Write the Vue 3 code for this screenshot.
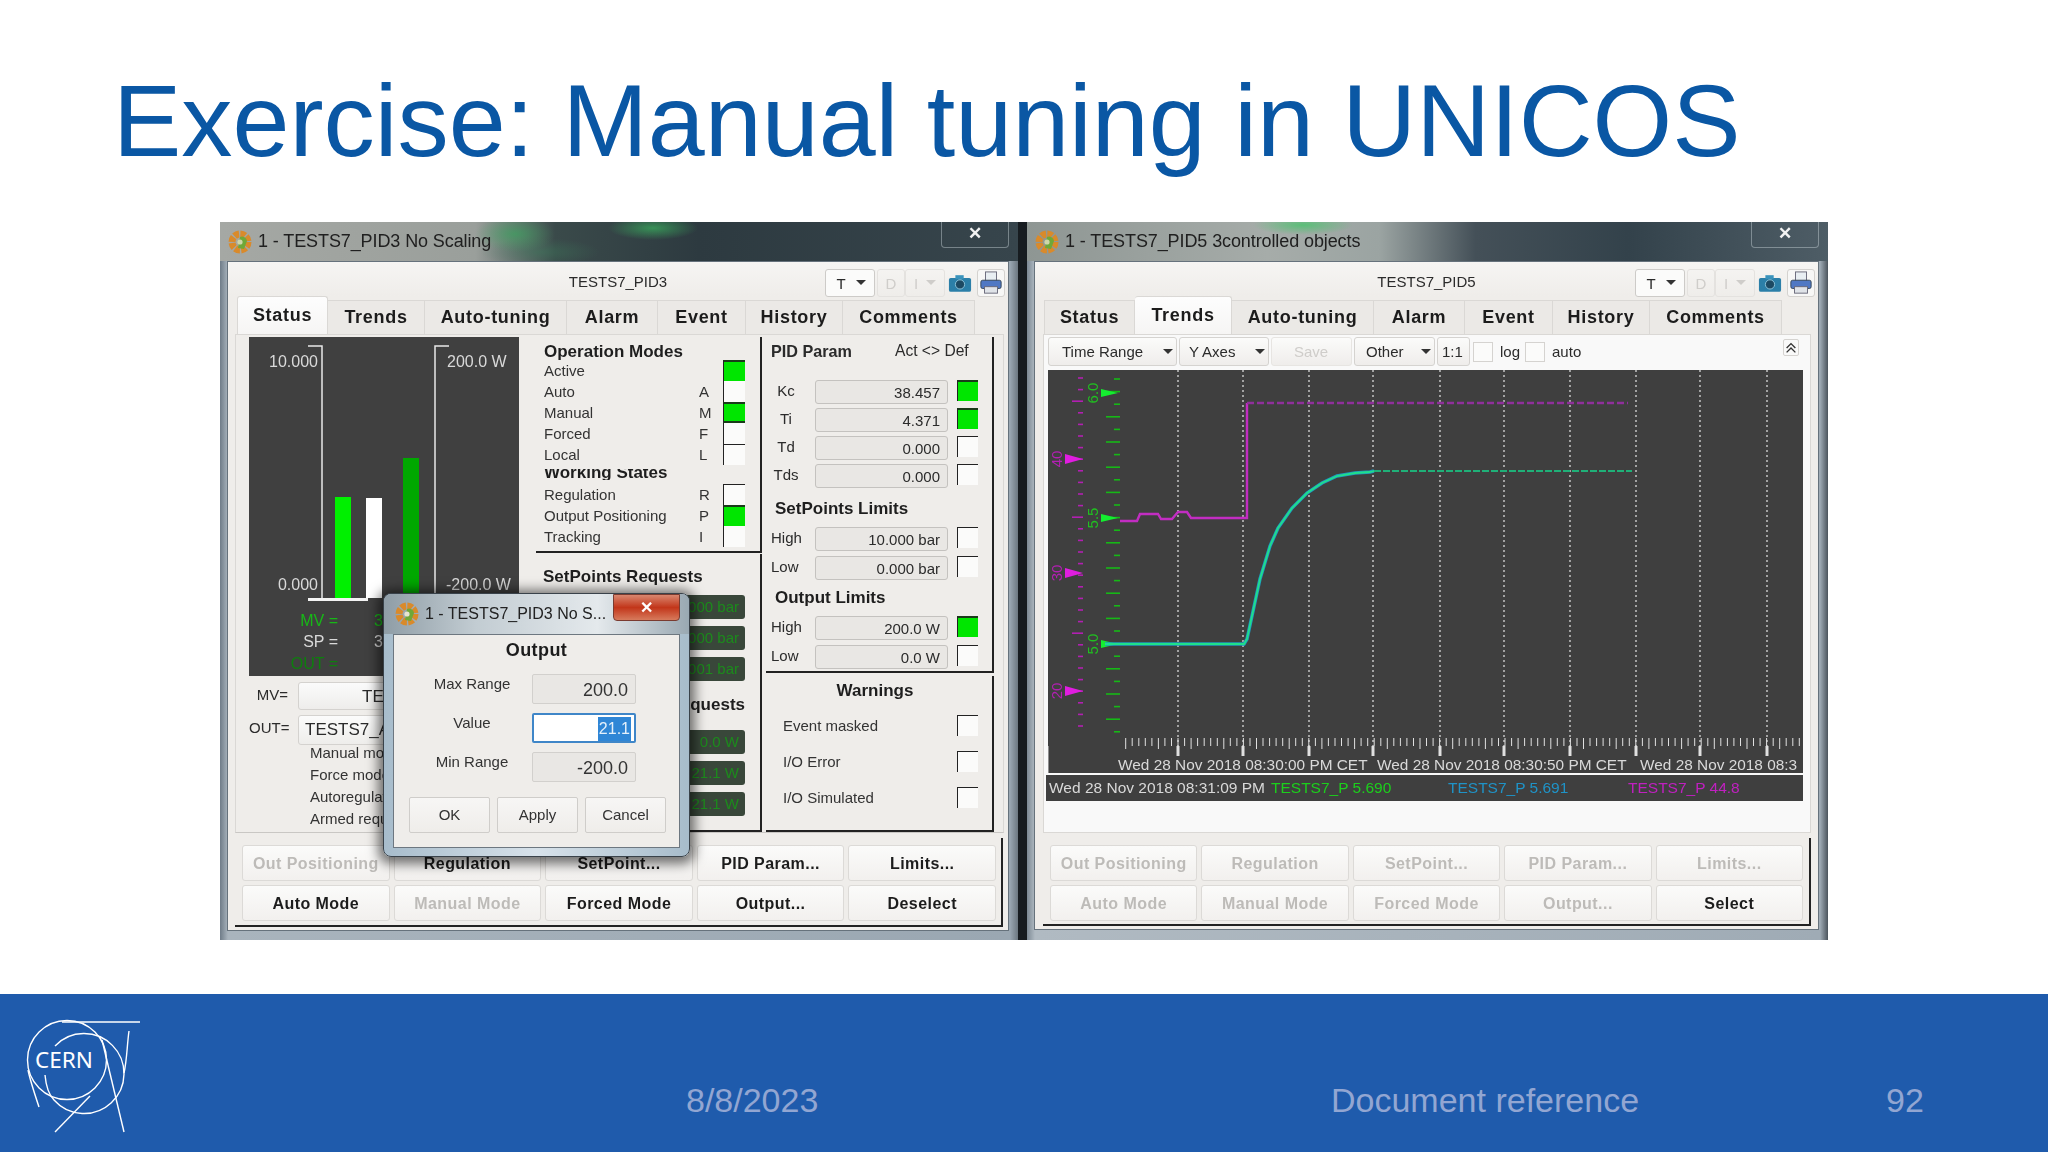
<template>
  <div class="slide">
    <h1 class="title">Exercise: Manual tuning in UNICOS</h1>

    <div class="shot">
      <div v-for="w in windows" :key="w.name" class="win" :class="w.cls">
        <div class="titlebar">
          <svg class="gear" viewBox="0 0 24 24">
            <circle cx="12" cy="12" r="8" fill="none" stroke="#d98a2b" stroke-width="7" stroke-dasharray="5 1.3" />
            <path d="M12 7a5 5 0 0 1 7 4l-3 8-6-1z" fill="#6fa838" />
            <circle cx="12" cy="12" r="2.6" fill="#cfd6a8" />
          </svg>
          <span class="wintitle">{{ w.title }}</span>
          <span class="winclose">✕</span>
        </div>

        <div class="client">
          <div class="head">
            <span></span>
            <span class="devname">{{ w.name }}</span>
            <div class="tools">
              <span class="tool t-t">T<i class="caret"></i></span>
              <span class="tool t-d off">D</span>
              <span class="tool t-i off">I<i class="caret"></i></span>
              <span class="tool t-c">
                <svg viewBox="0 0 26 20" width="24" height="19">
                  <rect x="1" y="4" width="24" height="15" rx="2" fill="#2b7fa8" />
                  <rect x="8" y="1" width="9" height="4" fill="#3a93bc" />
                  <circle cx="13" cy="11" r="5" fill="#1d4a63" stroke="#8fc7dd" />
                </svg>
              </span>
              <span class="tool t-p">
                <svg viewBox="0 0 26 26" width="24" height="24">
                  <rect x="7" y="1" width="12" height="10" fill="#e8eef2" stroke="#667" />
                  <rect x="2" y="10" width="22" height="9" rx="2" fill="#4f78c4" stroke="#345" />
                  <rect x="6" y="17" width="14" height="7" fill="#dfe3e8" stroke="#667" />
                </svg>
              </span>
            </div>
          </div>

          <div class="tabs">
            <span
              v-for="t in tabs"
              :key="t.n"
              class="tab"
              :class="{ active: t.n === w.active }"
              :style="{ width: t.w + 'px' }"
            >{{ t.n }}</span>
          </div>

          <!-- Status tab -->
          <div v-if="w.active === 'Status'" class="pane status">
            <div class="gaugecol">
              <svg class="gauge" viewBox="248 337 270 339">
                <rect x="248" y="337" width="270" height="339" fill="#404040" />
                <path d="M307 346h14v252M448 346h-14v252" fill="none" stroke="#e8e8e8" stroke-width="1.5" />
                <rect x="307" y="598" width="60" height="3" fill="#f4f4f4" />
                <rect x="334" y="497" width="16" height="101" fill="#00f000" />
                <rect x="365" y="498" width="16" height="100" fill="#fff" />
                <rect x="402" y="458" width="16" height="140" fill="#00a800" />
                <text x="317" y="367" class="g r">10.000</text>
                <text x="446" y="367" class="g">200.0 W</text>
                <text x="317" y="590" class="g r">0.000</text>
                <text x="445" y="590" class="g">-200.0 W</text>
                <text x="337" y="626" class="g r bright">MV =</text>
                <text x="337" y="647" class="g r">SP =</text>
                <text x="337" y="669" class="g r dim">OUT =</text>
                <text x="373" y="626" class="g bright">38.5</text>
                <text x="373" y="647" class="g">38.5</text>
              </svg>
              <div class="mvrow">
                <span class="mvlabel">MV=</span>
                <span class="mvfield center">TESTS7_AI</span>
              </div>
              <div class="mvrow out">
                <span class="mvlabel">OUT=</span>
                <span class="mvfield">TESTS7_AO</span>
              </div>
              <ul class="notes">
                <li v-for="n in notes" :key="n">{{ n }}</li>
              </ul>
            </div>

            <div class="midcol">
              <div class="ops">
                <div class="h">Operation Modes</div>
                <div v-for="r in opModes" :key="r.n" class="oprow">
                  <span class="opname">{{ r.n }}</span>
                  <span class="opkey">{{ r.k }}</span>
                  <span class="led" :class="r.c"></span>
                </div>
                <div class="h clipped">Working States</div>
                <div v-for="r in workStates" :key="r.n" class="oprow">
                  <span class="opname">{{ r.n }}</span>
                  <span class="opkey">{{ r.k }}</span>
                  <span class="led" :class="r.c"></span>
                </div>
              </div>
              <div class="reqs">
                <div class="h reqh">SetPoints Requests</div>
                <span v-for="v in spReq" :key="v" class="reqfield">{{ v }}</span>
                <div class="h reqh second">Output Requests</div>
                <span v-for="v in outReq" :key="v" class="reqfield">{{ v }}</span>
              </div>
            </div>

            <div class="rightcol">
              <div class="pid">
                <div class="pidhead"><b>PID Param</b><span>Act &lt;&gt; Def</span></div>
                <div v-for="r in pidRows" :key="r.l" class="pidrow" :class="r.cls">
                  <span class="pidlabel" :class="{ mid: r.mid }">{{ r.l }}</span>
                  <span class="readout">{{ r.v }}</span>
                  <span class="led flag" :class="r.on ? 'on' : 'box'"></span>
                </div>
                <div class="h limith one">SetPoints Limits</div>
                <div v-for="r in spLimits" :key="r.l" class="pidrow lim">
                  <span class="pidlabel">{{ r.l }}</span>
                  <span class="readout">{{ r.v }}</span>
                  <span class="led flag" :class="r.on ? 'on' : 'box'"></span>
                </div>
                <div class="h limith two">Output Limits</div>
                <div v-for="r in outLimits" :key="r.l" class="pidrow lim">
                  <span class="pidlabel">{{ r.l }}</span>
                  <span class="readout">{{ r.v }}</span>
                  <span class="led flag" :class="r.on ? 'on' : 'box'"></span>
                </div>
              </div>
              <div class="warnings">
                <div class="h warnh">Warnings</div>
                <div v-for="n in warnings" :key="n" class="warnrow">
                  <span>{{ n }}</span>
                  <span class="led flag box"></span>
                </div>
              </div>
            </div>
          </div>

          <!-- Trends tab -->
          <div v-else class="pane trends">
            <div class="trendbar">
              <span class="tb w129">Time Range<i class="caret"></i></span>
              <span class="tb w92">Y Axes<i class="caret"></i></span>
              <span class="tb w81 off">Save</span>
              <span class="tb w82">Other<i class="caret"></i></span>
              <span class="tb w33">1:1</span>
              <span class="chk"></span><span class="chklabel">log</span>
              <span class="chk"></span><span class="chklabel">auto</span>
              <span class="collapse">
                <svg viewBox="0 0 16 16" width="16" height="16">
                  <path d="M3 8l5-5 5 5M3 13l5-5 5 5" fill="none" stroke="#333" stroke-width="1.6" />
                </svg>
              </span>
            </div>
            <svg class="chart" viewBox="1048 369 755 403">
              <rect x="1048" y="369" width="755" height="403" fill="#3f3f3f" />
              <line
                v-for="x in gridX"
                :key="x"
                :x1="x" y1="369" :x2="x" y2="745"
                stroke="#e4e4e4" stroke-width="1.2" stroke-dasharray="2 3"
              />
              <!-- purple axis -->
              <line
                v-for="t in purpleTicks"
                :key="'p' + t.y"
                :x1="t.major ? 1072 : 1078" :y1="t.y" x2="1083" :y2="t.y"
                stroke="#b21fb2" stroke-width="1.6"
              />
              <g v-for="l in purpleLabels" :key="l.t">
                <path :d="`M1065 ${l.y - 5}l18 5-18 5z`" fill="#e01de0" />
                <text :transform="`translate(1062 ${l.y}) rotate(-90)`" class="axis" fill="#b21fb2">{{ l.t }}</text>
              </g>
              <!-- green axis -->
              <line
                v-for="t in greenTicks"
                :key="'g' + t.y"
                :x1="t.major ? 1106 : 1114" :y1="t.y" x2="1120" :y2="t.y"
                stroke="#16b816" stroke-width="1.6"
              />
              <g v-for="l in greenLabels" :key="l.t">
                <path :d="`M1101 ${l.y - 4}l17 4-17 4z`" fill="#14ee30" />
                <text :transform="`translate(1098 ${l.y}) rotate(-90)`" class="axis" fill="#20c020">{{ l.t }}</text>
              </g>
              <!-- traces -->
              <path
                d="M1120 520H1137L1140 513H1158L1161 518H1172L1178 511H1187L1191 517H1247V402"
                fill="none" stroke="#c22dc2" stroke-width="2.4"
              />
              <path d="M1247 402H1628" fill="none" stroke="#8f2f9c" stroke-width="2.4" stroke-dasharray="7 3" />
              <path :d="curve" fill="none" stroke="#1f9ac0" stroke-width="3.4" />
              <path :d="curve" fill="none" stroke="#1fe08a" stroke-width="1.8" />
              <path d="M1374 470H1632" fill="none" stroke="#1fb078" stroke-width="2" stroke-dasharray="7 2" />
              <!-- time axis -->
              <line
                v-for="t in timeTicks"
                :key="'t' + t.x"
                :x1="t.x" y1="737" :x2="t.x" :y2="t.mid ? 748 : 745"
                stroke="#e0e0e0"
              />
              <rect v-for="x in gridX" :key="'m' + x" :x="x - 1.5" y="745" width="3" height="10" fill="#e0e0e0" />
              <line x1="1048" y1="745" x2="1048" y2="772" stroke="#ddd" />
              <text x="1118" y="769" class="stamp">Wed 28 Nov 2018 08:30:00 PM CET</text>
              <text x="1377" y="769" class="stamp">Wed 28 Nov 2018 08:30:50 PM CET</text>
              <text x="1640" y="769" class="stamp">Wed 28 Nov 2018 08:3</text>
            </svg>
            <div class="strip">
              <span class="s-time">Wed 28 Nov 2018 08:31:09 PM</span>
              <span class="s-a">TESTS7_P 5.690</span>
              <span class="s-b">TESTS7_P 5.691</span>
              <span class="s-c">TESTS7_P 44.8</span>
            </div>
          </div>

          <div class="actions">
            <span v-for="b in w.buttons" :key="b.t" class="btn" :class="{ off: b.off }">{{ b.t }}</span>
          </div>
        </div>
      </div>

      <!-- setpoint dialog floats over the first window -->
      <div class="dialog">
        <div class="dlgtitle">
          <svg class="gear" viewBox="0 0 24 24">
            <circle cx="12" cy="12" r="8" fill="none" stroke="#d98a2b" stroke-width="7" stroke-dasharray="5 1.3" />
            <path d="M12 7a5 5 0 0 1 7 4l-3 8-6-1z" fill="#6fa838" />
            <circle cx="12" cy="12" r="2.6" fill="#e8e4d0" />
          </svg>
          <span class="dlgname">1 - TESTS7_PID3 No S...</span>
          <span class="dlgclose">✕</span>
        </div>
        <div class="dlgbody">
          <div class="dlghead">Output</div>
          <div class="dlggrid">
            <span class="dlglabel">Max Range</span><span class="dlgfield">200.0</span>
            <span class="dlglabel">Value</span><span class="dlgfield edit"><em>21.1</em></span>
            <span class="dlglabel">Min Range</span><span class="dlgfield">-200.0</span>
          </div>
          <div class="dlgbtns">
            <span class="dbtn">OK</span>
            <span class="dbtn">Apply</span>
            <span class="dbtn">Cancel</span>
          </div>
        </div>
      </div>
    </div>

    <footer class="footer">
      <svg class="logo" viewBox="0 0 150 150">
        <g fill="none" stroke="#fff" stroke-width="1.4">
          <circle cx="67" cy="70" r="39.5" />
          <path d="M62 32H140" />
          <path d="M55 56A40 40 0 1 1 54 110C48 104 46 96 45 85" />
          <path d="M28 80C30 90 35 105 39 117" />
          <path d="M129 41C127 55 127 70 124 83" />
          <path d="M102 50L124 142" />
          <path d="M90 106L55 142" />
        </g>
        <text x="35" y="78" class="cern">CERN</text>
      </svg>
      <span class="foot date">8/8/2023</span>
      <span class="foot doc">Document reference</span>
      <span class="foot num">92</span>
    </footer>
  </div>
</template>

<script setup>
const tabs = [
  { n: 'Status', w: 91 },
  { n: 'Trends', w: 97 },
  { n: 'Auto-tuning', w: 142 },
  { n: 'Alarm', w: 91 },
  { n: 'Event', w: 88 },
  { n: 'History', w: 97 },
  { n: 'Comments', w: 132 },
];

function buttons(labels, enabled) {
  return labels.map((t) => ({ t, off: !enabled.includes(t) }));
}

const labelsA = ['Out Positioning', 'Regulation', 'SetPoint...', 'PID Param...', 'Limits...'];

const windows = [
  {
    title: '1 - TESTS7_PID3 No Scaling',
    name: 'TESTS7_PID3',
    active: 'Status',
    cls: 'first',
    buttons: buttons(
      [...labelsA, 'Auto Mode', 'Manual Mode', 'Forced Mode', 'Output...', 'Deselect'],
      ['Regulation', 'SetPoint...', 'PID Param...', 'Limits...', 'Auto Mode', 'Forced Mode', 'Output...', 'Deselect'],
    ),
  },
  {
    title: '1 - TESTS7_PID5 3controlled objects',
    name: 'TESTS7_PID5',
    active: 'Trends',
    cls: 'second',
    buttons: buttons(
      [...labelsA, 'Auto Mode', 'Manual Mode', 'Forced Mode', 'Output...', 'Select'],
      ['Select'],
    ),
  },
];

const notes = ['Manual mode', 'Force mode', 'Autoregulation', 'Armed request'];

const opModes = [
  { n: 'Active', k: '', c: 'on' },
  { n: 'Auto', k: 'A', c: 'blank' },
  { n: 'Manual', k: 'M', c: 'on both' },
  { n: 'Forced', k: 'F', c: 'blank' },
  { n: 'Local', k: 'L', c: 'box' },
];
const workStates = [
  { n: 'Regulation', k: 'R', c: 'box' },
  { n: 'Output Positioning', k: 'P', c: 'on' },
  { n: 'Tracking', k: 'I', c: 'blank' },
];
const spReq = ['10.000 bar', '8.000 bar', '0.001 bar'];
const outReq = ['0.0 W', '21.1 W', '21.1 W'];

const pidRows = [
  { l: 'Kc', v: '38.457', on: true, mid: true },
  { l: 'Ti', v: '4.371', on: true, mid: true },
  { l: 'Td', v: '0.000', on: false, mid: true },
  { l: 'Tds', v: '0.000', on: false, mid: true },
];
const spLimits = [
  { l: 'High', v: '10.000 bar', on: false },
  { l: 'Low', v: '0.000 bar', on: false },
];
const outLimits = [
  { l: 'High', v: '200.0 W', on: true },
  { l: 'Low', v: '0.0 W', on: false },
];
const warnings = ['Event masked', 'I/O Error', 'I/O Simulated'];

const gridX = [1178, 1243, 1309, 1373, 1440, 1504, 1570, 1636, 1700, 1767];

const timeTicks = [];
for (let i = 0; i < 104; i++) {
  timeTicks.push({ x: +(1125.7 + i * 6.54).toFixed(1), mid: i % 5 === 0 });
}

const purpleTicks = [];
for (let i = 0; i < 31; i++) {
  const y = +(377 + i * 11.6).toFixed(1);
  purpleTicks.push({ y, major: i % 10 === 2 });
}
const purpleLabels = [
  { t: '40', y: 458 },
  { t: '30', y: 572 },
  { t: '20', y: 690 },
];

const greenTicks = [];
for (let i = 0; i < 29; i++) {
  const y = +(378 + i * 12.6).toFixed(1);
  greenTicks.push({ y, major: i % 2 === 1 });
}
const greenLabels = [
  { t: '6.0', y: 392 },
  { t: '5.5', y: 517 },
  { t: '5.0', y: 643 },
];

const curve =
  'M1105 643H1244L1247 638L1260 578L1270 545L1278 527L1292 507L1307 492L1322 482L1337 475L1355 472L1370 471L1374 470';
</script>

<style scoped>
.slide {
  width: 2048px;
  height: 1152px;
  background: #fff;
  display: flex;
  flex-direction: column;
  font-family: "Liberation Sans", Arial, sans-serif;
  overflow: hidden;
}

.title {
  height: 222px;
  margin: 0;
  padding: 66px 0 0 113px;
  box-sizing: border-box;
  font-size: 102.4px;
  line-height: 110px;
  font-weight: 400;
  color: #0a57a4;
}

.shot {
  position: relative;
  margin-left: 220px;
  width: 1608px;
  height: 718px;
  display: flex;
  gap: 9px;
  background: #171c20;
  filter: blur(0.55px);
  font-size: 15px;
  color: #2b2b2b;
}

/* window chrome */
.win {
  height: 718px;
  display: flex;
  flex-direction: column;
  padding: 0 9px 9px 7px;
  box-sizing: border-box;
}
.win.first {
  width: 798px;
  background: linear-gradient(90deg, #6f7c88 0, #a9b4bd 1%, #9aa7b2 99%, #6c7780 100%);
}
.win.second {
  width: 801px;
  background: linear-gradient(90deg, #7d8a95 0, #b0bac2 1%, #9fabb5 99%, #4b545c 100%);
  padding-bottom: 10px;
}

.titlebar {
  height: 39px;
  flex: none;
  margin: 0 -9px 0 -7px;
  padding-left: 8px;
  display: flex;
  align-items: center;
  gap: 6px;
}
.first .titlebar {
  background:
    radial-gradient(ellipse 40px 18px at 295px 12px, rgba(50, 170, 90, 0.6), transparent),
    radial-gradient(ellipse 45px 12px at 433px 6px, rgba(60, 200, 100, 0.6), transparent),
    radial-gradient(ellipse 60px 14px at 320px 30px, rgba(60, 120, 90, 0.5), transparent),
    linear-gradient(90deg, #a5a8a4 0, #9a9f9b 32%, #3a4a4a 42%, #2d3a40 60%, #37454c 100%);
}
.second .titlebar {
  background:
    radial-gradient(ellipse 50px 10px at 276px 3px, rgba(60, 200, 100, 0.7), transparent),
    linear-gradient(90deg, #8e9693 0, #a6aca9 30%, #9ba4a2 44%, #445058 56%, #33424b 75%, #4e5d66 100%);
}

.gear {
  width: 24px;
  height: 24px;
  flex: none;
}
.wintitle {
  font-size: 18px;
  color: #202020;
  letter-spacing: -0.1px;
}
.winclose {
  margin-left: auto;
  margin-right: 9px;
  align-self: flex-start;
  width: 68px;
  height: 26px;
  border: 1px solid rgba(200, 210, 215, 0.45);
  border-top: 0;
  border-radius: 0 0 4px 4px;
  box-sizing: border-box;
  color: #f2f2f2;
  font-size: 17px;
  font-weight: 700;
  text-align: center;
  line-height: 24px;
}

.client {
  flex: 1;
  display: flex;
  flex-direction: column;
  background: #efedea;
  border: 1px solid #66727c;
  box-sizing: border-box;
  min-height: 0;
}

.head {
  height: 34px;
  flex: none;
  display: grid;
  grid-template-columns: 1fr auto 1fr;
  align-items: start;
  background: linear-gradient(#f6f5f3, #efedea);
}
.devname {
  margin-top: 11px;
  font-size: 15px;
  line-height: 17px;
}
.tools {
  justify-self: end;
  margin-top: 7px;
  margin-right: 3px;
  display: flex;
  height: 28px;
}
.tool {
  position: relative;
  display: flex;
  align-items: center;
  justify-content: center;
  box-sizing: border-box;
  height: 28px;
  border-radius: 3px;
  font-size: 15px;
}
.tool.off {
  color: #cfcdca;
}
.t-t { width: 50px; border: 1px solid #cdcbc8; background: #fbfbfa; padding-right: 18px; }
.t-d { width: 28px; margin-left: 2px; border: 1px solid #e4e2df; }
.t-i { width: 40px; border: 1px solid #e4e2df; padding-right: 18px; }
.t-c { width: 30px; }
.t-p { width: 28px; margin-left: 2px; border: 1px solid #d4d2cf; background: #f7f7f6; }
.caret {
  position: absolute;
  right: 8px;
  top: 10px;
  border: 5px solid transparent;
  border-top: 5px solid #333;
  border-bottom: 0;
}
.t-i .caret {
  border-top-color: #cfcdca;
}

.tabs {
  height: 38px;
  flex: none;
  display: flex;
  align-items: flex-end;
  padding-left: 9px;
}
.tab {
  height: 34px;
  box-sizing: border-box;
  background: #ebe9e6;
  border: 1px solid #dad8d5;
  border-left: 0;
  border-bottom: 0;
  text-align: center;
  font-weight: 700;
  font-size: 18px;
  line-height: 33px;
  letter-spacing: 0.7px;
  color: #1c1c1c;
}
.tab:first-child {
  border-left: 1px solid #dad8d5;
}
.tab.active {
  height: 38px;
  background: linear-gradient(#fdfdfd, #f6f5f4);
  border-radius: 3px 3px 0 0;
  line-height: 36px;
}

.pane {
  height: 499px;
  flex: none;
  margin-left: 7px;
  box-sizing: border-box;
  border: 1px solid #dad8d5;
}

/* status pane */
.status {
  width: 769px;
  padding: 2px 0 0 13px;
  display: flex;
  position: relative;
  background: #efedea;
  border-bottom-color: #c9c7c4;
}
.gaugecol {
  width: 275px;
  flex: none;
}
.gauge {
  display: block;
  width: 270px;
  height: 339px;
}
.g {
  font-size: 16px;
  fill: #d9d9d9;
}
.g.bright {
  fill: #17b717;
}
.g.dim {
  fill: #0d7f0d;
}
.g.r {
  text-anchor: end;
}

.mvrow {
  display: flex;
  align-items: stretch;
  margin-top: 6px;
  margin-right: -8px;
  height: 28px;
}
.mvrow.out {
  margin-top: 5px;
  height: 30px;
}
.mvlabel {
  width: 39px;
  text-align: right;
  margin-right: 10px;
  line-height: 26px;
  font-size: 15px;
}
.mvfield {
  flex: 1;
  background: linear-gradient(#fbfbfb, #eeedeb);
  border: 1px solid #d4d2cf;
  border-radius: 3px;
  box-sizing: border-box;
  padding-left: 6px;
  font-size: 17px;
  line-height: 28px;
  white-space: nowrap;
}
.mvfield.center {
  text-align: center;
  padding: 0 16px 0 0;
}
.notes {
  list-style: none;
  margin: -3px 0 0;
  padding: 0 0 0 61px;
  font-size: 15px;
  line-height: 22px;
  color: #333;
}

.midcol {
  width: 226px;
  margin-left: 12px;
  flex: none;
  display: flex;
  flex-direction: column;
}
.h {
  font-weight: 700;
  font-size: 17px;
  color: #1e1e1e;
}
.ops {
  height: 216px;
  padding: 4px 15px 0 8px;
  box-sizing: border-box;
  border-right: 2px solid #222;
  border-bottom: 2px solid #222;
  flex: none;
}
.ops .h {
  height: 19px;
  line-height: 22px;
}
.ops .h.clipped {
  height: 11px;
  line-height: 7px;
  overflow: hidden;
  margin: 4px 0 4px;
}
.oprow {
  display: grid;
  grid-template-columns: 1fr 24px 22px;
  height: 21px;
  align-items: center;
  font-size: 15px;
  color: #333;
}
.opkey {
  font-size: 15px;
}
.led {
  display: block;
  box-sizing: border-box;
  height: 100%;
  width: 22px;
  border-left: 1px solid #222;
}
.led.on {
  background: #00e600;
  border-top: 2px solid #1a3a1a;
}
.led.both {
  border-bottom: 2px solid #1a3a1a;
}
.led.blank {
  background: #fbfbfa;
}
.led.box {
  background: #fbfbfa;
  border-top: 1px solid #222;
}
.led.flag {
  width: 21px;
  height: 21px;
}

.reqs {
  flex: 1;
  margin-top: 1px;
  padding: 12px 15px 0 7px;
  box-sizing: border-box;
  display: flex;
  flex-direction: column;
  align-items: flex-end;
  border-right: 2px solid #222;
  border-bottom: 2px solid #222;
}
.reqh {
  align-self: flex-start;
  height: 29px;
  line-height: 22px;
  white-space: nowrap;
}
.reqh.second {
  align-self: flex-end;
  height: 49px;
  line-height: 47px;
  margin-top: -7px;
}
.reqfield {
  width: 110px;
  height: 24px;
  flex: none;
  margin-bottom: 7px;
  background: #39473a;
  border-radius: 3px;
  color: #1c8b1c;
  text-align: right;
  padding-right: 6px;
  box-sizing: border-box;
  font-size: 15px;
  line-height: 24px;
}

.rightcol {
  width: 228px;
  margin-left: 4px;
  flex: none;
  display: flex;
  flex-direction: column;
}
.pid {
  height: 336px;
  flex: none;
  box-sizing: border-box;
  padding: 4px 0 0 1px;
  border-right: 2px solid #222;
  border-bottom: 2px solid #222;
}
.pidhead {
  display: flex;
  height: 39px;
  padding-left: 4px;
  line-height: 20px;
  font-size: 15.6px;
}
.pidhead b {
  font-size: 16.2px;
}
.pidhead span {
  margin-left: 43px;
}
.pidrow {
  display: grid;
  grid-template-columns: 48px 133px 21px;
  column-gap: 0;
  height: 24px;
  margin-bottom: 4px;
  align-items: start;
}
.pidrow.lim {
  margin-bottom: 5px;
}
.pidrow .flag {
  margin-left: 9px;
}
.pidlabel {
  line-height: 22px;
  font-size: 15px;
  padding-left: 4px;
}
.pidlabel.mid {
  padding: 0 10px 0 0;
  text-align: center;
}
.readout {
  display: block;
  height: 24px;
  box-sizing: border-box;
  border: 1px solid #c4c2bf;
  border-radius: 3px;
  background: #e9e7e4;
  text-align: right;
  padding-right: 7px;
  font-size: 15px;
  line-height: 24px;
}
.limith {
  padding-left: 8px;
  height: 35px;
  line-height: 34px;
}
.limith.two {
  height: 31px;
  line-height: 26px;
}

.warnings {
  flex: 1;
  margin-top: 3px;
  border-right: 2px solid #222;
  border-bottom: 2px solid #222;
  box-sizing: border-box;
  padding-bottom: 15px;
  display: flex;
  flex-direction: column;
}
.warnh {
  height: 32px;
  line-height: 30px;
  text-align: center;
  padding-right: 8px;
}
.warnrow {
  flex: 1;
  display: flex;
  align-items: center;
  justify-content: space-between;
  padding: 0 14px 0 17px;
  color: #333;
}

/* trends pane */
.trends {
  width: 768px;
  margin-left: 8px;
  background: #f9f9f9;
  padding: 2px 0 0 2px;
}
.trendbar {
  display: flex;
  align-items: center;
  height: 29px;
  padding-left: 2px;
  margin-bottom: 4px;
  font-size: 15px;
}
.tb {
  position: relative;
  height: 29px;
  flex: none;
  box-sizing: border-box;
  border: 1px solid #d5d3d0;
  border-radius: 3px;
  background: linear-gradient(#fbfbfa, #efedeb);
  margin-right: 2px;
  padding-left: 13px;
  line-height: 28px;
}
.tb.off {
  color: #cfcdca;
  padding-left: 22px;
  border-color: #e7e5e2;
}
.w129 { width: 129px; }
.w92 { width: 90px; padding-left: 9px; }
.w81 { width: 81px; }
.w82 { width: 81px; padding-left: 11px; }
.w33 { width: 33px; padding-left: 4px; }
.tb .caret {
  right: 3px;
  top: 11px;
}
.chk {
  flex: none;
  width: 20px;
  height: 20px;
  margin-left: 1px;
  background: #fbfbfa;
  border: 1px solid #d5d3d0;
  box-sizing: border-box;
}
.chklabel {
  margin: 0 4px 0 7px;
}
.collapse {
  margin-left: auto;
  margin-right: 11px;
  margin-top: -8px;
  width: 16px;
  height: 17px;
  border: 1px solid #d5d3d0;
  border-radius: 2px;
  box-sizing: border-box;
  display: flex;
}
.chart {
  display: block;
  width: 755px;
  height: 403px;
  margin-left: 2px;
}
.axis {
  font-size: 15px;
  text-anchor: middle;
}
.stamp {
  font-size: 15.4px;
  fill: #d9d9d9;
}
.strip {
  height: 26px;
  width: 757px;
  margin-top: 2px;
  background: #3f3f3f;
  display: flex;
  align-items: center;
  font-size: 15.5px;
  white-space: nowrap;
  color: #d9d9d9;
  padding-left: 3px;
  box-sizing: border-box;
}
.s-time { width: 222px; }
.s-a { width: 177px; color: #1ccf1c; }
.s-b { width: 180px; color: #1f93c7; }
.s-c { color: #c020c0; }

/* bottom buttons */
.actions {
  flex: 1;
  margin: 5px 5px 3px 7px;
  padding: 7px 5px 0 7px;
  box-sizing: border-box;
  display: grid;
  grid-template-columns: repeat(5, 1fr);
  grid-auto-rows: 36px;
  gap: 4px;
  border-right: 2px solid #222;
  border-bottom: 2px solid #222;
}
.second .actions {
  margin: 5px 7px 3px 8px;
  padding-right: 6px;
}
.btn {
  border: 1px solid #dcdad7;
  border-radius: 3px;
  box-sizing: border-box;
  background: linear-gradient(#fbfbfa, #f2f0ee);
  font-weight: 700;
  font-size: 16px;
  letter-spacing: 0.45px;
  text-align: center;
  line-height: 35px;
  color: #1c1c1c;
  white-space: nowrap;
  overflow: hidden;
}
.btn.off {
  color: #bdbbb8;
}

/* dialog */
.dialog {
  position: absolute;
  left: 163px;
  top: 371px;
  width: 307px;
  height: 264px;
  border-radius: 8px;
  border: 1px solid #39424a;
  box-sizing: border-box;
  background: linear-gradient(90deg, #a7bccb, #d7e2ea 50%, #a7bccb);
  box-shadow: 0 2px 12px 5px rgba(0, 0, 0, 0.55);
  padding: 0 9px 8px;
  display: flex;
  flex-direction: column;
}
.dlgtitle {
  height: 40px;
  flex: none;
  margin: 0 -9px;
  padding-left: 11px;
  display: flex;
  align-items: center;
  gap: 6px;
  border-radius: 7px 7px 0 0;
  background: linear-gradient(90deg, #8f9da6, #c2ccd2 30%, #e4e9ec 70%, #99a8b2);
}
.dlgname {
  font-size: 16px;
  color: #222;
  white-space: nowrap;
}
.dlgclose {
  align-self: flex-start;
  margin-left: auto;
  margin-right: 9px;
  flex: none;
  width: 67px;
  height: 27px;
  border-radius: 0 0 4px 4px;
  background: linear-gradient(#d9876f, #c2361a 50%, #d77a5c);
  color: #fff;
  font-size: 16px;
  font-weight: 700;
  text-align: center;
  line-height: 25px;
  border: 1px solid #7a3b30;
  box-sizing: border-box;
}
.dlgbody {
  flex: 1;
  background: #efedea;
  border: 1px solid #6d7780;
  box-sizing: border-box;
}
.dlghead {
  height: 30px;
  line-height: 30px;
  text-align: center;
  font-weight: 700;
  font-size: 18px;
  letter-spacing: 0.4px;
  color: #1c1c1c;
}
.dlggrid {
  display: grid;
  grid-template-columns: 120px 104px;
  grid-auto-rows: 30px;
  row-gap: 9px;
  margin: 9px 0 0 18px;
  align-items: start;
}
.dlglabel {
  text-align: center;
  line-height: 20px;
  font-size: 15px;
  color: #333;
}
.dlgfield {
  height: 30px;
  box-sizing: border-box;
  background: #e9e7e4;
  border: 1px solid #d2d0cd;
  border-radius: 2px;
  text-align: right;
  padding-right: 7px;
  font-size: 18px;
  line-height: 30px;
  color: #333;
}
.dlgfield.edit {
  background: #fff;
  border: 2px solid #3f86c8;
  padding-right: 3px;
  line-height: 27px;
}
.dlgfield.edit em {
  font-style: normal;
  font-size: 16px;
  color: #e4f0fb;
  background: #2f86d6;
  display: inline-block;
  line-height: 24px;
  padding: 0 1px;
}
.dlgbtns {
  display: flex;
  gap: 7px;
  margin: 15px 0 0 15px;
}
.dbtn {
  width: 81px;
  height: 36px;
  border: 1px solid #cfcdca;
  border-radius: 2px;
  box-sizing: border-box;
  background: linear-gradient(#f7f6f5, #efedea);
  font-size: 15px;
  text-align: center;
  line-height: 34px;
  color: #333;
}

/* footer */
.footer {
  margin-top: 54px;
  height: 158px;
  flex: none;
  background: #1f5bac;
  display: grid;
  grid-template-columns: 686px 645px 555px auto;
  align-items: start;
}
.logo {
  grid-column: 1;
  grid-row: 1;
  width: 150px;
  height: 150px;
  margin-top: -4px;
  display: block;
}
.logo .cern {
  font-size: 22.5px;
  fill: #fff;
  font-family: "Noto Sans", "Liberation Sans", sans-serif;
}
.foot {
  grid-row: 1;
  margin-top: 86px;
  font-size: 34px;
  line-height: 40px;
  color: #92a6d2;
  white-space: nowrap;
}
.date { grid-column: 2; }
.doc { grid-column: 3; }
.num { grid-column: 4; }
</style>
